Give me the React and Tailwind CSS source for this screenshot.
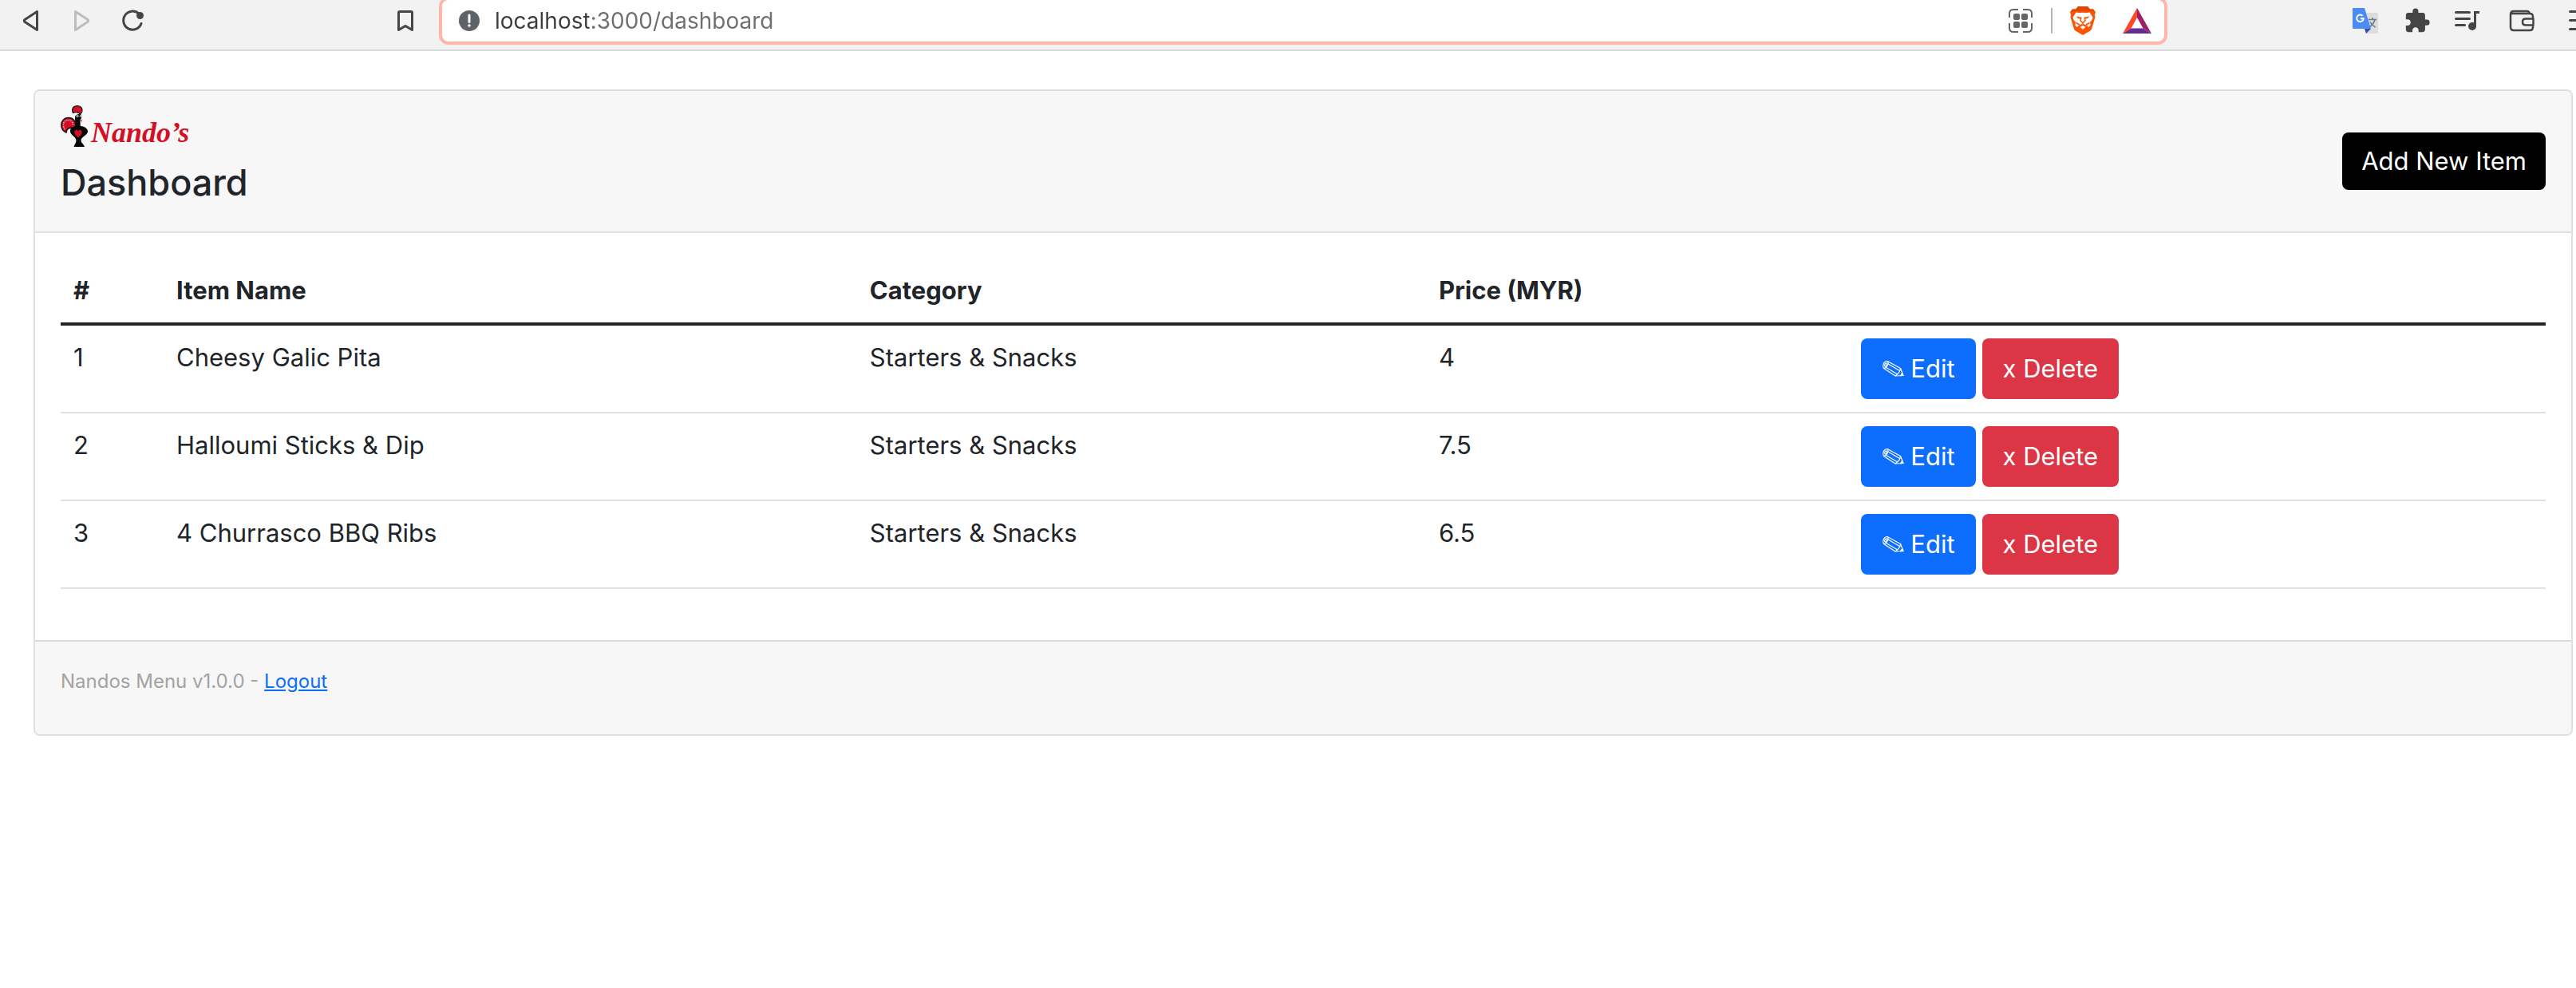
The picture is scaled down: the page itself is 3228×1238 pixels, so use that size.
import { useState } from "react";
import { MdExtension } from "react-icons/md";

const menuItems = [
  { id: 1, name: "Cheesy Galic Pita", category: "Starters & Snacks", price: 4 },
  { id: 2, name: "Halloumi Sticks & Dip", category: "Starters & Snacks", price: 7.5 },
  { id: 3, name: "4 Churrasco BBQ Ribs", category: "Starters & Snacks", price: 6.5 },
];

function BrowserBar() {
  const [url, setUrl] = useState("localhost:3000/dashboard");

  return (
    <header className="flex h-16 items-start overflow-hidden border-b-2 border-[#d5dadd] bg-[#f2f2f2] text-[#454545]">
      <div className="flex h-[52px] w-[550px] shrink-0 items-center pl-7 pr-[30px]">
        <button type="button" aria-label="Back">
          <svg width="22" height="28" viewBox="0 0 22 28" fill="none" stroke="currentColor" strokeWidth="3" strokeLinejoin="round">
            <path d="M18.5 2.5v23L3.2 15.6Q1.6 14 3.2 12.4Z" />
          </svg>
        </button>
        <button type="button" aria-label="Forward" className="ml-[42px] text-[#bdbdbd]">
          <svg width="22" height="28" viewBox="0 0 22 28" fill="none" stroke="currentColor" strokeWidth="3" strokeLinejoin="round">
            <path d="M2.5 2.5v23l15.3-9.9q1.6-1.6 0-3.2Z" />
          </svg>
        </button>
        <button type="button" aria-label="Reload" className="ml-[38px]">
          <svg width="30" height="28" viewBox="0 0 30 28" fill="none" stroke="currentColor" strokeWidth="3" strokeLinecap="round">
            <path d="M22 5.2A11.5 11.5 0 1 0 25 17.5" />
            <circle cx="23.5" cy="7.5" r="4.5" fill="currentColor" stroke="none" />
          </svg>
        </button>
        <button type="button" aria-label="Bookmark" className="ml-auto">
          <svg width="24" height="28" viewBox="0 0 24 28" fill="none" stroke="currentColor" strokeWidth="3" strokeLinejoin="round">
            <path d="M5 2.5h14q1.5 0 1.5 1.5v21.5L12 20.5 3.5 25.5V4Q3.5 2.5 5 2.5Z" />
          </svg>
        </button>
      </div>

      <div className="-mt-1 flex h-[60px] min-w-0 flex-1 items-center rounded-xl border-4 border-[#fdb6a9] bg-white pl-5 pr-4">
        <svg className="shrink-0" width="28" height="28" viewBox="0 0 28 28">
          <circle cx="14" cy="14" r="13" fill="#5f6368" />
          <path d="M14 7v8.5" stroke="#fff" strokeWidth="3" strokeLinecap="round" />
          <circle cx="14" cy="20" r="1.8" fill="#fff" />
        </svg>
        <input
          type="text"
          aria-label="Address"
          value={url}
          onChange={(e) => setUrl(e.target.value)}
          className="ml-[18px] min-w-0 flex-1 bg-[linear-gradient(to_right,#3c3c3c_118px,#6e6e6e_118px)] bg-clip-text text-[28px] leading-9 text-transparent outline-none"
        />
        <svg className="shrink-0" width="32" height="32" viewBox="0 0 32 32" fill="none" stroke="#666" strokeWidth="2">
          <path d="M2 12V7q0-5 5-5h6M19 2h6q5 0 5 5v5M30 19v6q0 5-5 5h-6M13 30H7q-5 0-5-5v-6" />
          <g fill="#666" stroke="none">
            <rect x="7" y="7" width="8" height="8" rx="2" />
            <rect x="17" y="7" width="8" height="8" rx="2" />
            <rect x="7" y="17" width="8" height="8" rx="2" />
            <rect x="17" y="17" width="8" height="8" rx="2" />
          </g>
        </svg>
        <span className="ml-[22px] h-8 w-0.5 shrink-0 bg-[#b5b5b5]" />
        <button type="button" aria-label="Shields" className="ml-[22px] shrink-0">
          <svg width="32" height="36" viewBox="0 0 32 36">
            <path d="M10 0h12l3 3.5h4l3 4-1.200 3 .7 3L27 28.500Q26 30 24.500 31L17 35.500q-1 .6-2 0L7.500 31Q6 30 5 28.500L.5 13.500l.7-3L0 7.500l3-4h4Z" fill="#fb5404" />
            <path d="M10 0h12l3 3.500h4l3 4L29 6.500 24 6H8L3 6.500 0 7.500l3-4h4Z" fill="#e14700" />
            <path d="M7.500 7.500l4.500.8 4-.6 4 .6 4.500-.8 4 6.200q-.2 3-3.500 6.300l.6 3.500-2 2.500-3.100-2.500-3-1.300h-3l-3 1.300L8.400 26l-2-2.500.6-3.500q-3.300-3.300-3.500-6.300Z" fill="#fff" />
            <path d="M12.500 26l3.500-2 3.500 2-3.500 2.800Z" fill="#fff" />
            <path d="M7.500 12.500l6 1.200-.5 1.500q-3 1-5.500-2.700ZM24.500 12.500l-6 1.200.5 1.500q3 1 5.500-2.700Z" fill="#fb5404" />
            <path d="M14 13.500l-1 4.500 3 2.500 3-2.500-1-4.500M16 20.500v2.500M7.500 20.500l4.500 2.500M24.500 20.500L20 23" fill="none" stroke="#fb5404" strokeWidth="1.500" />
          </svg>
        </button>
        <button type="button" aria-label="Rewards" className="ml-[34px] shrink-0">
          <svg width="36" height="32" viewBox="0 0 36 32">
            <path d="M18 0v12L10.5 25.5 0 32Z" fill="#ff4724" />
            <path d="M18 0v12l7.5 13.5L36 32Z" fill="#9e1f63" />
            <path d="M0 32l10.5-6.5h15L36 32Z" fill="#662d91" />
          </svg>
        </button>
      </div>

      <div className="flex h-[52px] w-[512px] shrink-0 items-center pl-[232px]">
        <button type="button" aria-label="Translate" className="shrink-0">
          <svg width="32" height="32" viewBox="0 0 32 32">
            <path d="M11 6h19q2 0 2 2v22q0 2-2 2H17Z" fill="#dcdcdc" />
            <path d="M20 14.5h10M25 12v2.5M28 14.5c-1 4-4 7.5-7.5 10M22 17.5c1.5 3 4 5 6.5 6.5" fill="none" stroke="#607d8b" strokeWidth="1.6" />
            <path d="M15 26h8l-6 6Z" fill="#3949ab" />
            <path d="M1 0h14l8 26H1q-1 0-1-1V1Q0 0 1 0Z" fill="#4c8bf5" />
            <path d="M12.6 9.8A4.300 4.300 0 1 0 13.800 13.300H9.800" fill="none" stroke="#fff" strokeWidth="2" />
          </svg>
        </button>
        <button type="button" aria-label="Extensions" className="ml-8 shrink-0">
          <MdExtension size={34} />
        </button>
        <button type="button" aria-label="Media" className="ml-[30px] shrink-0">
          <svg width="32" height="26" viewBox="0 0 32 26" fill="none" stroke="currentColor" strokeWidth="3" strokeLinecap="round">
            <path d="M1.5 2.5h17M1.5 10.5h17M1.5 18.5h11" />
            <path d="M31 2.5h-5.5V20" strokeLinecap="butt" />
            <circle cx="22" cy="20" r="5" fill="currentColor" stroke="none" />
          </svg>
        </button>
        <button type="button" aria-label="Wallet" className="ml-9 shrink-0">
          <svg width="32" height="28" viewBox="0 0 32 28" fill="none" stroke="currentColor" strokeWidth="2.5" strokeLinejoin="round">
            <path d="M30 11V9q0-4-4-4H3M2 5v17q0 4 4 4h20q4 0 4-4v-2M2 6q0-4 4-4h17q2 0 3 3" />
            <path d="M30.5 11.5H21q-4 0-4 4t4 4h9.5Z" />
          </svg>
        </button>
        <button type="button" aria-label="Menu" className="ml-[43px] shrink-0">
          <svg width="28" height="28" viewBox="0 0 28 28" stroke="currentColor" strokeWidth="3" strokeLinecap="round">
            <path d="M1.5 2.5h25M1.5 13.5h25M1.5 24.5h25" />
          </svg>
        </button>
      </div>
    </header>
  );
}

function Logo() {
  return (
    <svg width="166" height="56" viewBox="0 0 166 56" role="img" aria-label="Nando's">
      {/* comb */}
      <path d="M15.500 9.500C13 4 16 .7 21 .7c5 0 7 4 5.800 7.300L24.500 11.500c-1.500-3-6-3.500-9-2Z" fill="#d30f26" stroke="#111" strokeWidth="1.200" />
      {/* tail */}
      <path d="M18.500 27C20 20 15.500 15.500 10 15.500 4 15.500.8 20 .8 24.500c0 4.500 2.500 8 6.200 9.500.5-4.500 3.500-6.500 8-5.500Z" fill="#d30f26" stroke="#111" strokeWidth="1.400" />
      <path d="M15.500 24.500C15 16.500 4.500 16.500 3.500 23.500c-.2 2.500.5 5 2 7" fill="none" stroke="#fff" strokeWidth="1.300" strokeDasharray="1.200 1.400" />
      {/* body */}
      <path d="M18.500 13q3-3 7-1.500l.5 4.500-1.500 2 .3 8c6 .5 9.500 3.500 9.200 7-.4 4.500-8.500 6.500-8.500 11 0 3 3.500 4.500 4.500 8H16.500c1-3.500 3-5 3-8 0-4.500-7-6.500-7.500-11-.2-3.500 1.500-6 6-7 1-5-.8-9 .5-13Z" fill="#080808" />
      <circle cx="21" cy="13.5" r="1.700" fill="#999" />
      <circle cx="25" cy="13.5" r="1.400" fill="#999" />
      <path d="M24.500 17.500l2 .5v3.500Z" fill="#d30f26" />
      <path d="M22 40.500c-4-3.500-5-5.500-4.500-8 .8-2.200 3.500-2.200 4.500 0 1-2.200 3.700-2.200 4.500 0 .5 2.500-.5 4.500-4.500 8Z" fill="#d30f26" />
      <text x="38" y="46" fontSize="36" fontWeight="700" fontStyle="italic" fill="#d30f26" className="font-['Liberation_Serif',serif]">
        Nando’s
      </text>
    </svg>
  );
}

function PencilIcon() {
  return (
    <svg width="28" height="22" viewBox="0 0 28 22" fill="none" stroke="currentColor" strokeWidth="1.2" strokeLinejoin="round" aria-hidden="true">
      <path d="M7 1.500L23.500 10.500 27 19.500l-10 .5L2.500 10.500C.5 7 2.500 1.500 7 1.500Z" />
      <path d="M7 1.500C9.500 3 6.500 10.500 2.500 10.500M8 5l14.500 8.500M5.500 9.500L19 17.500M23.500 10.500q0 5-6.500 9.500" />
      <ellipse cx="5" cy="6" rx="1.200" ry="2.200" transform="rotate(25 5 6)" />
      <path d="M25.500 16.500l1.500 3-3.500.2Z" fill="currentColor" />
    </svg>
  );
}

export default function App() {
  const [items, setItems] = useState(menuItems);

  const deleteItem = (id) => {
    setItems(items.filter((item) => item.id !== id));
  };

  return (
    <div className="min-h-screen bg-white font-['Inter',sans-serif] text-[31px] leading-[48px] text-[#212529]">
      <BrowserBar />

      <main className="pl-[42px] pr-1 pt-12">
        <div className="overflow-hidden rounded-lg border-2 border-[#dfdfdf]">
          <div className="flex items-center justify-between border-b-2 border-[#dfdfdf] bg-[#f7f7f7] px-8 py-4">
            <div>
              <div className="h-[70px] pt-0.5">
                <Logo />
              </div>
              <h4 className="mb-4 text-[45px] font-medium leading-[58px]">Dashboard</h4>
            </div>
            <button type="button" className="h-[72px] rounded-lg bg-black px-6 text-white">
              Add New Item
            </button>
          </div>

          <div className="p-8">
            <table className="mb-8 w-full table-fixed border-collapse text-left">
              <thead>
                <tr className="border-b-4 border-[#212529]">
                  <th className="w-[129px] p-4 font-bold">#</th>
                  <th className="w-[27.9%] p-4 font-bold">Item Name</th>
                  <th className="w-[22.9%] p-4 font-bold">Category</th>
                  <th className="w-[17%] p-4 font-bold">Price (MYR)</th>
                  <th className="p-4" aria-label="Actions"></th>
                </tr>
              </thead>
              <tbody>
                {items.map((item) => (
                  <tr key={item.id} className="border-b-2 border-[#dee2e6] align-top">
                    <td className="p-4">{item.id}</td>
                    <td className="p-4">{item.name}</td>
                    <td className="p-4">{item.category}</td>
                    <td className="p-4">{item.price}</td>
                    <td className="p-4">
                      <div className="flex gap-2">
                        <button type="button" className="flex h-[76px] items-center gap-2 rounded-lg bg-[#0d6efd] px-[26px] text-white">
                          <PencilIcon />
                          Edit
                        </button>
                        <button
                          type="button"
                          onClick={() => deleteItem(item.id)}
                          className="h-[76px] rounded-lg bg-[#dc3545] px-[26px] text-white"
                        >
                          x Delete
                        </button>
                      </div>
                    </td>
                  </tr>
                ))}
              </tbody>
            </table>
          </div>

          <div className="border-t-2 border-[#d9d9d9] bg-[#f7f7f7] px-8 pb-[46px] pt-[30px] text-[24px] leading-10 text-[#a3a3a3]">
            Nandos Menu v1.0.0 -{" "}
            <a href="#logout" className="text-[#0d6efd] underline">
              Logout
            </a>
          </div>
        </div>
      </main>
    </div>
  );
}
